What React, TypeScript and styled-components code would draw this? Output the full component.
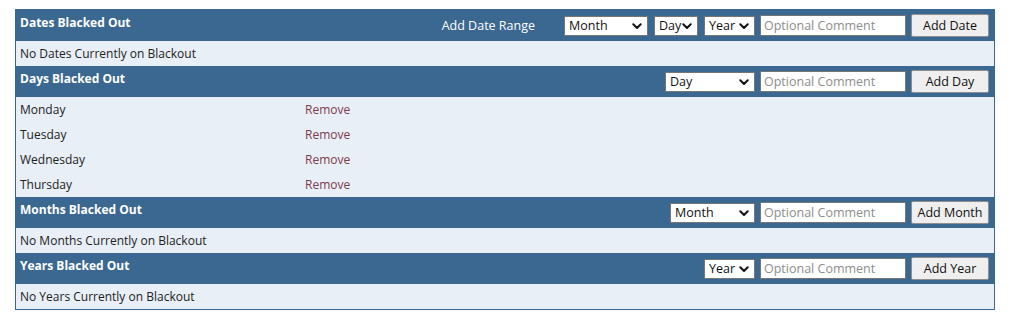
import React from "react";
import styled, { createGlobalStyle } from "styled-components";

const GlobalStyle = createGlobalStyle`
  body {
    margin: 0;
    background: #ffffff;
    font-family: "Open Sans", "Noto Sans", sans-serif;
    font-size: 12px;
    color: #222222;
  }
`;

const HEADER_BLUE = "#3b6890";

type Control =
  | { kind: "select"; label: string; width: number }
  | { kind: "label"; text: string };

type Section = {
  title: string;
  controls: Control[];
  button: string;
  empty?: string;
  rows?: string[];
};

const sections: Section[] = [
  {
    title: "Dates Blacked Out",
    controls: [
      { kind: "label", text: "Add Date Range" },
      { kind: "select", label: "Month", width: 84 },
      { kind: "select", label: "Day", width: 44 },
      { kind: "select", label: "Year", width: 51 },
    ],
    button: "Add Date",
    empty: "No Dates Currently on Blackout",
  },
  {
    title: "Days Blacked Out",
    controls: [{ kind: "select", label: "Day", width: 90 }],
    button: "Add Day",
    rows: ["Monday", "Tuesday", "Wednesday", "Thursday"],
  },
  {
    title: "Months Blacked Out",
    controls: [{ kind: "select", label: "Month", width: 85 }],
    button: "Add Month",
    empty: "No Months Currently on Blackout",
  },
  {
    title: "Years Blacked Out",
    controls: [{ kind: "select", label: "Year", width: 51 }],
    button: "Add Year",
    empty: "No Years Currently on Blackout",
  },
];

const Chevron = () => (
  <svg width="10" height="7" viewBox="0 0 10 7">
    <path
      d="M1.3 1.3 L5 5 L8.7 1.3"
      fill="none"
      stroke="#111"
      strokeWidth="2"
      strokeLinecap="round"
      strokeLinejoin="round"
    />
  </svg>
);

const App = () => {
  return (
    <>
      <GlobalStyle />
      <Panel>
        {sections.map((s) => (
          <React.Fragment key={s.title}>
            <HeaderRow>
              <Title>{s.title}</Title>
              <Controls>
                {s.controls.map((c, i) =>
                  c.kind === "label" ? (
                    <RangeLabel key={i}>{c.text}</RangeLabel>
                  ) : (
                    <SelectBox key={i} $width={c.width}>
                      <span>{c.label}</span>
                      <ChevronWrap>
                        <Chevron />
                      </ChevronWrap>
                    </SelectBox>
                  )
                )}
                <Comment placeholder="Optional Comment" />
                <AddButton>{s.button}</AddButton>
              </Controls>
            </HeaderRow>
            {s.empty && <BodyRow>{s.empty}</BodyRow>}
            {s.rows?.map((r) => (
              <ItemRow key={r}>
                <span>{r}</span>
                <RemoveLink href="#">Remove</RemoveLink>
              </ItemRow>
            ))}
          </React.Fragment>
        ))}
      </Panel>
    </>
  );
};
export default App;

const Panel = styled.div`
  width: 980px;
  margin: 9px 0 0 15px;
  border: 1px solid ${HEADER_BLUE};
  box-sizing: border-box;
  background: #e8eff6;
`;

const HeaderRow = styled.div`
  height: 31px;
  background: ${HEADER_BLUE};
  display: flex;
  justify-content: space-between;
  align-items: center;
  padding: 0 5px 0 4px;
`;

const Title = styled.div`
  align-self: flex-start;
  padding-top: 4px;
  color: #ffffff;
  font-weight: 700;
  font-size: 12px;
  line-height: 18px;
`;

const Controls = styled.div`
  display: flex;
  align-items: center;
`;

const RangeLabel = styled.span`
  color: #ffffff;
  font-size: 12.5px;
  margin-right: 29px;
`;

const SelectBox = styled.div<{ $width: number }>`
  position: relative;
  width: ${(p) => p.$width}px;
  height: 20px;
  box-sizing: border-box;
  margin-right: 6px;
  padding-left: 4px;
  background: #ffffff;
  border: 1px solid #767676;
  display: flex;
  align-items: center;
  font-size: 12.5px;
  color: #111;

  &:last-of-type {
    margin-right: 5px;
  }
`;

const ChevronWrap = styled.span`
  position: absolute;
  right: 5px;
  top: 6px;
  display: flex;
`;

const Comment = styled.input`
  width: 146px;
  height: 21px;
  box-sizing: border-box;
  margin: 0 5px 0 0;
  padding: 0 3px;
  border: 1px solid #767676;
  font-family: inherit;
  font-size: 12.5px;
  &::placeholder {
    color: #8d8d8d;
  }
`;

const AddButton = styled.button`
  width: 78px;
  height: 23px;
  box-sizing: border-box;
  padding: 0;
  background: #efefef;
  border: 1px solid #8f8f8f;
  border-radius: 2px;
  font-family: inherit;
  font-size: 12.5px;
  color: #111;
`;

const BodyRow = styled.div`
  height: 25px;
  display: flex;
  align-items: center;
  padding-left: 4px;
`;

const ItemRow = styled(BodyRow)`
  display: grid;
  grid-template-columns: 285px 1fr;
  align-items: center;
`;

const RemoveLink = styled.a`
  color: #7d3b4c;
  text-decoration: none;
`;
